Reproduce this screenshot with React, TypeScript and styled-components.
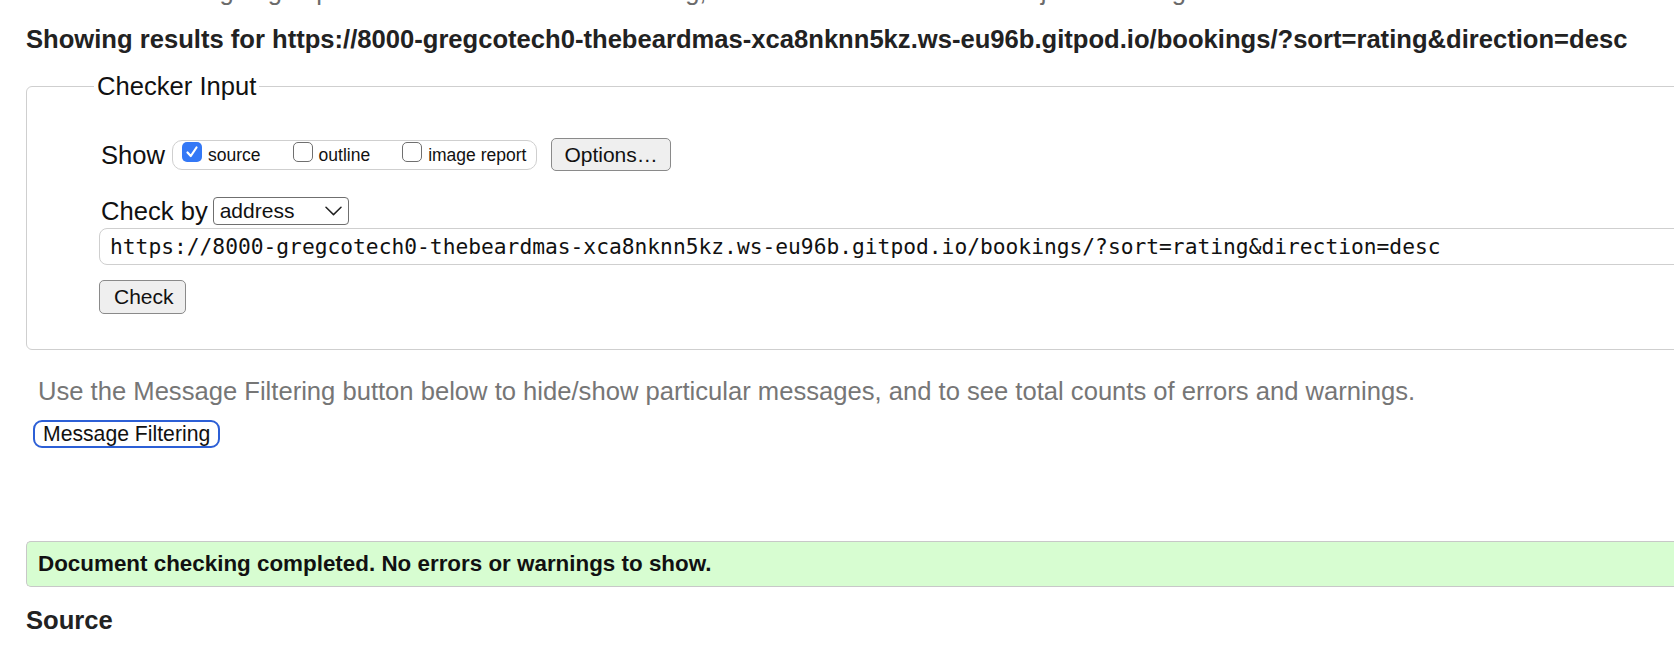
import React from 'react';
import styled, { createGlobalStyle } from 'styled-components';

const GlobalStyle = createGlobalStyle`
  html, body {
    margin: 0;
    padding: 0;
    background: #fff;
    overflow: hidden;
  }
  body {
    font-family: "Liberation Sans", Arial, sans-serif;
    color: #222;
  }
`;

const URL = 'https://8000-gregcotech0-thebeardmas-xca8nknn5kz.ws-eu96b.gitpod.io/bookings/?sort=rating&direction=desc';

const Page = styled.div`
  width: 1800px;
  padding-left: 26px;
`;

const Intro = styled.p`
  margin: -24px 0 0;
  font-size: 25.6px;
  line-height: 30px;
  color: #6b6b6b;
  white-space: nowrap;
`;

const Heading = styled.h2`
  margin: 18px 0 0;
  font-size: 25.6px;
  line-height: 30px;
  font-weight: bold;
  white-space: nowrap;
`;

const Fieldset = styled.fieldset`
  margin: 17px 0 0;
  padding: 0 0 35px 72px;
  border: 1px solid #cfcfcf;
  border-radius: 6px;
  min-width: 0;
`;

const Legend = styled.legend`
  margin-left: -5px;
  padding: 0 3px;
  font-size: 25.6px;
  line-height: 30px;
  color: #111;
`;

const Row = styled.div<{ $top: number; $height: number }>`
  display: flex;
  align-items: center;
  margin-top: ${p => p.$top}px;
  height: ${p => p.$height}px;
`;

const RowLabel = styled.span<{ $gap: number }>`
  margin-left: 2px;
  font-size: 25.6px;
  line-height: 30px;
  color: #111;
  margin-right: ${p => p.$gap}px;
`;

const ToggleGroup = styled.div`
  display: flex;
  align-items: flex-start;
  gap: 32px;
  box-sizing: border-box;
  height: 30px;
  padding: 0 10px 0 9px;
  border: 1px solid #cfcfcf;
  border-radius: 10px;
`;

const Toggle = styled.label`
  display: flex;
  align-items: flex-start;
  gap: 6px;
`;

const Box = styled.span<{ $checked?: boolean }>`
  display: flex;
  align-items: center;
  justify-content: center;
  box-sizing: border-box;
  width: 20px;
  height: 20px;
  margin-top: 1px;
  border-radius: 5px;
  background: ${p => (p.$checked ? '#3478f6' : '#fff')};
  border: ${p => (p.$checked ? 'none' : '1px solid #6f6f6f')};
`;

const ToggleText = styled.span`
  padding-top: 4px;
  font-size: 17.5px;
  line-height: 20px;
  color: #111;
`;

const Button = styled.button<{ $width?: number }>`
  box-sizing: border-box;
  height: 34px;
  ${p => (p.$width ? `width: ${p.$width}px;` : '')}
  padding: 0 13px;
  font-family: "Liberation Sans", Arial, sans-serif;
  font-size: 21px;
  color: #111;
  background: #efefef;
  border: 1px solid #8a8a8a;
  border-radius: 5px;
`;

const OptionsButton = styled(Button)`
  margin-left: 14px;
  height: 33px;
  padding: 0 12px;
`;

const SelectBox = styled.div`
  display: flex;
  align-items: center;
  justify-content: space-between;
  box-sizing: border-box;
  width: 136px;
  height: 28px;
  padding: 0 6px 0 6px;
  border: 1px solid #6f6f6f;
  border-radius: 4px;
  font-size: 21px;
  color: #111;
`;

const UrlInput = styled.input`
  display: block;
  box-sizing: border-box;
  width: 1700px;
  height: 37px;
  margin-top: 3px;
  padding: 0 10px;
  border: 1px solid #cfcfcf;
  border-radius: 8px;
  font-family: "DejaVu Sans Mono", "Liberation Mono", monospace;
  font-size: 21.25px;
  color: #111;
  background: #fff;
  outline: none;
`;

const CheckButton = styled(Button)`
  display: block;
  margin-top: 15px;
  padding: 0 14px;
`;

const Hint = styled.p`
  margin: 26px 0 0;
  padding-left: 12px;
  font-size: 25.6px;
  line-height: 30px;
  color: #767676;
  white-space: nowrap;
`;

const FilterButton = styled.button`
  display: block;
  box-sizing: border-box;
  margin: 14px 0 0 7px;
  height: 28px;
  padding: 0 8px;
  font-family: "Liberation Sans", Arial, sans-serif;
  font-size: 21.2px;
  line-height: 24px;
  color: #111;
  background: #fff;
  border: 2px solid #2c5fd6;
  border-radius: 9px;
`;

const SuccessBox = styled.div`
  box-sizing: border-box;
  margin-top: 93px;
  height: 46px;
  display: flex;
  align-items: center;
  padding-left: 11px;
  background: #d7fdd1;
  border: 1px solid #c8c8c8;
  border-right: none;
  border-radius: 5px 0 0 5px;
  font-size: 22.4px;
  font-weight: bold;
  color: #111;
`;

const SubHeading = styled.h2`
  margin: 18px 0 0;
  font-size: 25.6px;
  line-height: 30px;
  font-weight: bold;
`;

const CheckMark = () => (
  <svg width="14" height="14" viewBox="0 0 14 14">
    <path d="M2.5 7.5 L5.8 11 L11.5 2.5" fill="none" stroke="#fff" strokeWidth="2.2" strokeLinecap="round" strokeLinejoin="round" />
  </svg>
);

const Chevron = () => (
  <svg width="17" height="10" viewBox="0 0 17 10">
    <path d="M1 1.2 L8.5 8.6 L16 1.2" fill="none" stroke="#222" strokeWidth="1.5" strokeLinecap="round" strokeLinejoin="round" />
  </svg>
);

const toggles = [
  { label: 'source', checked: true },
  { label: 'outline', checked: false },
  { label: 'image report', checked: false },
];

export default function App() {
  return (
    <>
      <GlobalStyle />
      <Page>
        <Intro>
          This tool is an ongoing experiment in better HTML checking, and its behavior remains subject to change
        </Intro>
        <Heading>Showing results for {URL}</Heading>

        <Fieldset>
          <Legend>Checker Input</Legend>
          <Row $top={37} $height={33}>
            <RowLabel $gap={7}>Show</RowLabel>
            <ToggleGroup>
              {toggles.map(t => (
                <Toggle key={t.label}>
                  <Box $checked={t.checked}>{t.checked && <CheckMark />}</Box>
                  <ToggleText>{t.label}</ToggleText>
                </Toggle>
              ))}
            </ToggleGroup>
            <OptionsButton>Options…</OptionsButton>
          </Row>
          <Row $top={26} $height={28}>
            <RowLabel $gap={5}>Check by</RowLabel>
            <SelectBox>
              <span>address</span>
              <Chevron />
            </SelectBox>
          </Row>
          <UrlInput readOnly value={URL} />
          <CheckButton $width={87}>Check</CheckButton>
        </Fieldset>

        <Hint>
          Use the Message Filtering button below to hide/show particular messages, and to see total counts of errors and warnings.
        </Hint>
        <FilterButton>Message Filtering</FilterButton>

        <SuccessBox>Document checking completed. No errors or warnings to show.</SuccessBox>
        <SubHeading>Source</SubHeading>
      </Page>
    </>
  );
}
